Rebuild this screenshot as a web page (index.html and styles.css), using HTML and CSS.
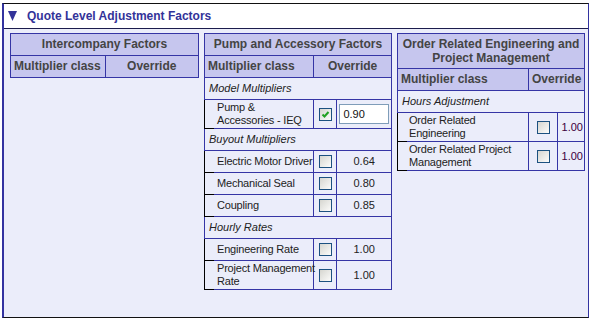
FILE: index.html
```html
<!DOCTYPE html>
<html lang="en">
<head>
<meta charset="UTF-8">
<title>Quote Level Adjustment Factors</title>
<link rel="stylesheet" href="styles.css">
</head>
<body>
    <div class="panel">
        <div class="panel-head">
            <svg class="arrow" width="9" height="10" viewBox="0 0 9 10"><polygon points="0,0 9,0 4.5,10" fill="#333399"/></svg>
            <span>Quote Level Adjustment Factors</span>
        </div>
        <div class="panel-body">
            <!-- Intercompany -->
            <table class="factors ic">
                <colgroup><col class="c-name"><col class="c-ovr"></colgroup>
                <tr><th colspan="2" class="title">Intercompany Factors</th></tr>
                <tr><th class="cls">Multiplier class</th><th>Override</th></tr>
            </table>

            <!-- Pump and accessory -->
            <table class="factors pump">
                <colgroup><col class="c-name"><col class="c-chk"><col class="c-val"></colgroup>
                <tr><th colspan="3" class="title">Pump and Accessory Factors</th></tr>
                <tr><th class="cls">Multiplier class</th><th colspan="2">Override</th></tr>
                <tr><td colspan="3" class="group">Model Multipliers</td></tr>
                <tr class="tall">
                    <td class="name">Pump &amp;<br>Accessories - IEQ</td>
                    <td class="chk"><span class="box checked"><svg width="11" height="11" viewBox="0 0 11 11"><path d="M2.5 5.5 L4.5 7.5 L8.5 3" fill="none" stroke="#21a121" stroke-width="2"/></svg></span></td>
                    <td class="val"><input type="text" class="ovr" value="0.90"></td>
                </tr>
                <tr><td colspan="3" class="group">Buyout Multipliers</td></tr>
                <tr><td class="name">Electric Motor Driver</td><td class="chk"><span class="box"></span></td><td class="val">0.64</td></tr>
                <tr><td class="name">Mechanical Seal</td><td class="chk"><span class="box"></span></td><td class="val">0.80</td></tr>
                <tr><td class="name">Coupling</td><td class="chk"><span class="box"></span></td><td class="val">0.85</td></tr>
                <tr><td colspan="3" class="group">Hourly Rates</td></tr>
                <tr><td class="name">Engineering Rate</td><td class="chk"><span class="box"></span></td><td class="val">1.00</td></tr>
                <tr class="tall"><td class="name">Project Management<br>Rate</td><td class="chk"><span class="box"></span></td><td class="val">1.00</td></tr>
            </table>

            <!-- Order related engineering -->
            <table class="factors ore">
                <colgroup><col class="c-name"><col class="c-chk"><col class="c-val"></colgroup>
                <tr><th colspan="3" class="title">Order Related Engineering and Project Management</th></tr>
                <tr><th class="cls">Multiplier class</th><th colspan="2">Override</th></tr>
                <tr><td colspan="3" class="group">Hours Adjustment</td></tr>
                <tr class="tall"><td class="name">Order Related<br>Engineering</td><td class="chk"><span class="box"></span></td><td class="val">1.00</td></tr>
                <tr class="tall"><td class="name">Order Related Project<br>Management</td><td class="chk"><span class="box"></span></td><td class="val">1.00</td></tr>
            </table>
        </div>
    </div>
</body>
</html>
```

FILE: styles.css
```css
body {
    margin: 0;
    padding-top: 3px;
    background: #fff;
    font-family: "Liberation Sans", Arial, sans-serif;
}

.panel {
    margin-left: 2px;
    width: 587px;
    height: 315px;
    box-sizing: border-box;
    border-left: 2px solid #3333a0;
    border-right: 1px solid #3333a0;
    border-top: 1px solid #111;
    border-bottom: 1px solid #111;
    background: #ebedfa;
}

.panel-head {
    display: flex;
    align-items: center;
    gap: 10px;
    height: 24px;
    padding-left: 4px;
    background: #fff;
    border-bottom: 1px solid #1c1c4c;
    color: #333399;
    font-weight: bold;
    font-size: 12px;
}

.arrow {
    display: block;
}

.panel-body {
    display: flex;
    align-items: flex-start;
    gap: 5px;
    padding: 4px 6px;
}

.factors {
    flex: none;
    border-collapse: collapse;
    table-layout: fixed;
    border: 1px solid #3535a5;
    font-size: 11px;
    color: #222;
}

.factors th,
.factors td {
    border: 1px solid #3535a5;
}

.factors th {
    background: #c6c6ee;
    color: #444;
    font-size: 12px;
    line-height: 15px;
    padding: 3px 2px;
    font-weight: bold;
    text-align: center;
    white-space: nowrap;
    overflow: hidden;
}

.factors th.cls {
    text-align: left;
    padding-left: 3px;
}

.ic { width: 189px; }
.ic .c-name { width: 94px; }
.ic .c-ovr { width: 93px; }

.pump { width: 188px; }
.pump .c-name { width: 108px; }
.pump .c-chk { width: 23px; }
.pump .c-val { width: 54px; }

.ore { width: 188px; }
.ore .c-name { width: 130px; }
.ore .c-chk { width: 28px; }
.ore .c-val { width: 27px; }

.ore th.title {
    white-space: normal;
    line-height: 14px;
}

.factors td {
    line-height: 13px;
    padding: 4px 4px;
    height: 13px;
    white-space: nowrap;
    overflow: hidden;
}

.factors td.group {
    font-style: italic;
}

.factors td.name {
    position: relative;
    padding-left: 12px;
    padding-right: 0;
    letter-spacing: -0.2px;
    overflow: visible;
    border-left-color: #000;
}

.factors td.name::after {
    content: "";
    position: absolute;
    left: -1px;
    bottom: -1px;
    width: 10px;
    height: 1px;
    background: #000;
}

.ore td.name {
    padding-left: 11px;
}

.factors tr.tall td {
    padding-top: 1px;
    padding-bottom: 1px;
    height: 26px;
}

.factors td.chk {
    padding: 0;
    text-align: center;
}

.factors td.val {
    padding: 0;
    text-align: center;
}

.ore td.val {
    color: #400040;
    text-align: right;
    padding-right: 1px;
}

.box {
    display: inline-block;
    vertical-align: middle;
    width: 11px;
    height: 11px;
    border: 1px solid #1c5180;
    background: linear-gradient(135deg, #d6d6d0, #fcfcfb);
}

.box svg {
    display: block;
}

.ovr {
    display: block;
    box-sizing: border-box;
    width: 50px;
    height: 20px;
    margin-left: 2px;
    padding: 0 3px;
    border: 1px solid #7f9db9;
    background: #fff;
    font-family: "Liberation Sans", Arial, sans-serif;
    font-size: 11px;
    color: #111;
}

.ovr:focus {
    outline: none;
}
```
